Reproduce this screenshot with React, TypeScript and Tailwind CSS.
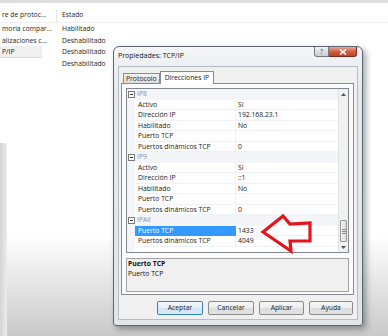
import React from 'react'

type Row =
  | { kind: 'group'; name: string }
  | { kind: 'prop'; label: string; value?: string; selected?: boolean }

const rows: Row[] = [
  { kind: 'group', name: 'IP8' },
  { kind: 'prop', label: 'Activo', value: 'Sí' },
  { kind: 'prop', label: 'Dirección IP', value: '192.168.23.1' },
  { kind: 'prop', label: 'Habilitado', value: 'No' },
  { kind: 'prop', label: 'Puerto TCP', value: '' },
  { kind: 'prop', label: 'Puertos dinámicos TCP', value: '0' },
  { kind: 'group', name: 'IP9' },
  { kind: 'prop', label: 'Activo', value: 'Sí' },
  { kind: 'prop', label: 'Dirección IP', value: '::1' },
  { kind: 'prop', label: 'Habilitado', value: 'No' },
  { kind: 'prop', label: 'Puerto TCP', value: '' },
  { kind: 'prop', label: 'Puertos dinámicos TCP', value: '0' },
  { kind: 'group', name: 'IPAll' },
  { kind: 'prop', label: 'Puerto TCP', value: '1433', selected: true },
  { kind: 'prop', label: 'Puertos dinámicos TCP', value: '4049' },
]

const bgRows = [
  { name: 'moria compar...', state: 'Habilitado' },
  { name: 'alizaciones c...', state: 'Deshabilitado' },
  { name: 'P/IP', state: 'Deshabilitado', sel: true },
  { name: '', state: 'Deshabilitado' },
]

function MinusBox() {
  return (
    <svg width="7" height="7" viewBox="0 0 7 7" className="ml-[1px]">
      <rect x="0.5" y="0.5" width="6" height="6" fill="#fff" stroke="#7a7a7a" />
      <line x1="2" y1="3.5" x2="5" y2="3.5" stroke="#333" />
    </svg>
  )
}

function GridRow({ row }: { row: Row }) {
  if (row.kind === 'group') {
    return (
      <div className="flex h-[10.5px] bg-[#f3f5f8] items-center">
        <div className="w-[8px] flex items-center">
          <MinusBox />
        </div>
        <div className="pl-[2px] text-[#8d8d8d] leading-[10px]">{row.name}</div>
      </div>
    )
  }
  return (
    <div className="flex h-[10.5px]">
      <div className="w-[8px] bg-[#f3f5f8]" />
      <div
        className={
          row.selected
            ? 'w-[101px] bg-[#3399ff] text-white pl-[3px] leading-[10.5px] whitespace-nowrap'
            : 'w-[101px] border-b border-r border-[#eef1f5] pl-[3px] leading-[10px] whitespace-nowrap text-[#1a1a1a]'
        }
      >
        {row.label}
      </div>
      <div className="flex-1 border-b border-[#eef1f5] pl-[2px] leading-[10px] text-[#1a1a1a]">
        {row.value}
      </div>
    </div>
  )
}

function Button({ label, w, primary }: { label: string; w: string; primary?: boolean }) {
  return (
    <div
      className={`${w} h-[14px] rounded-[2px] border flex items-center justify-center text-[#222] ${
        primary
          ? 'border-[#3c7fb1] bg-[linear-gradient(to_bottom,#f4f9fd_0%,#e3eff9_50%,#cfe4f5_51%,#d9ebf8_100%)]'
          : 'border-[#8a8a8a] bg-[linear-gradient(to_bottom,#f6f6f6_0%,#ececec_50%,#dddddd_51%,#e2e2e2_100%)]'
      }`}
    >
      {label}
    </div>
  )
}

export default function App() {
  return (
    <div className="relative w-[388px] h-[336px] overflow-hidden font-['Open_Sans',sans-serif] text-[6.8px] text-[#1e1e1e] bg-[linear-gradient(to_bottom,#ffffff_0%,#ffffff_70%,#c9c9c9_100%)]">
      {/* background list window */}
      <div className="border-t-[3px] border-[#dedede]">
        <div className="flex h-[20px] pt-[7px] leading-[10px] border-b border-[#f0f0f0]">
          <div className="w-[57px] pl-[2px] border-r border-[#e6e6e6]">re de protoc...</div>
          <div className="pl-[5px]">Estado</div>
        </div>
        {bgRows.map((r, i) => (
          <div key={i} className="flex h-[11.5px] leading-[11.5px]">
            <div className="w-[57px] flex">
              <div className={r.sel ? 'w-[42px] pl-[2px] bg-[#f0f0f0] border-b border-[#d8d8d8]' : 'pl-[2px]'}>
                {r.name}
              </div>
            </div>
            <div className="pl-[5px]">{r.state}</div>
          </div>
        ))}
      </div>
      <div className="absolute left-0 top-[143px] bottom-0 w-[7px] bg-[linear-gradient(to_right,#d4d4d4,#ececec)]" />

      {/* dialog window */}
      <div className="absolute left-[113px] top-[46px] w-[250px] h-[280px] border border-[#5c6670] rounded-t-[6px] rounded-b-[3px] bg-[linear-gradient(to_bottom,#f3f5f8_0%,#e6e9ee_15%,#e1e5ea_100%)] shadow-[3px_3px_6px_rgba(0,0,0,0.35)] flex flex-col">
        <div className="relative h-[19px] flex items-center pl-[4px] text-[7px] text-[#111]">
          Propiedades: TCP/IP
          <div className="absolute right-[5px] top-0 flex">
            <div className="w-[15px] h-[10px] border border-[#707a85] border-t-0 rounded-bl-[3px] bg-[linear-gradient(to_bottom,#f0f2f4,#c9ced4)] flex items-center justify-center text-[7px] leading-none text-[#555]">
              ?
            </div>
            <div className="w-[28px] h-[10px] border border-[#7a2a1c] border-t-0 border-l-0 rounded-br-[3px] bg-[linear-gradient(to_bottom,#e9a99a,#cf5a40_55%,#c2432a)] flex items-center justify-center">
              <svg width="8" height="6" viewBox="0 0 8 6">
                <path d="M1 0.5 L7 5.5 M7 0.5 L1 5.5" stroke="#fff" strokeWidth="1.6" />
              </svg>
            </div>
          </div>
        </div>

        <div className="mx-[4px] h-[254px] border border-[#b4bcc5] bg-[#f0f0f0] flex flex-col">
          {/* tabs */}
          <div className="flex items-end h-[16px] pt-[4px] pl-[4px]">
            <div className="h-[10px] px-[2px] border border-[#898c95] border-b-0 bg-[linear-gradient(to_bottom,#f3f3f3,#dcdcdc)] leading-[10px] text-[#222]">
              Protocolo
            </div>
            <div className="relative z-10 h-[13px] -mb-px px-[4px] border border-[#898c95] border-b-0 bg-white leading-[12px] text-[#222]">
              Direcciones IP
            </div>
          </div>

          {/* tab panel */}
          <div className="ml-[2px] mr-[3px] h-[212px] border border-[#898c95] bg-[#fbfbfb] px-[4px] pt-[4px] flex flex-col">
            <div className="h-[165px] border border-[#828790] bg-white flex">
              <div className="flex-1 flex flex-col">
                {rows.map((r, i) => (
                  <GridRow key={i} row={r} />
                ))}
                <div className="flex-1 flex">
                  <div className="w-[8px] bg-[#f3f5f8]" />
                </div>
              </div>
              <div className="w-[10px] bg-[#f1f1f1] border-l border-[#e2e2e2] flex flex-col">
                <div className="h-[10px] flex items-center justify-center">
                  <svg width="5" height="3" viewBox="0 0 5 3">
                    <path d="M0 3 L2.5 0 L5 3 Z" fill="#555" />
                  </svg>
                </div>
                <div className="flex-1">
                  <div className="mt-[121px] h-[22px] mx-[1px] border border-[#9a9a9a] rounded-[1px] bg-[linear-gradient(to_right,#f2f2f2,#dcdcdc)] flex flex-col items-center justify-center gap-[1px]">
                    <div className="w-[4px] h-px bg-[#8a8a8a]" />
                    <div className="w-[4px] h-px bg-[#8a8a8a]" />
                    <div className="w-[4px] h-px bg-[#8a8a8a]" />
                  </div>
                </div>
                <div className="h-[10px] flex items-center justify-center">
                  <svg width="5" height="3" viewBox="0 0 5 3">
                    <path d="M0 0 L2.5 3 L5 0 Z" fill="#555" />
                  </svg>
                </div>
              </div>
            </div>

            <div className="mt-[5px] h-[34px] border border-[#a3a3a3] bg-[#f0f0f0] px-[1px] leading-[10px] text-[#111]">
              <div className="font-bold">Puerto TCP</div>
              <div>Puerto TCP</div>
            </div>
          </div>

          {/* buttons */}
          <div className="mt-[6px] flex justify-end gap-[5px] pr-[4px]">
            <Button label="Aceptar" w="w-[46px]" primary />
            <Button label="Cancelar" w="w-[46px]" />
            <Button label="Aplicar" w="w-[45px]" />
            <Button label="Ayuda" w="w-[44px]" />
          </div>
        </div>
      </div>

      {/* red annotation arrow */}
      <svg className="absolute left-0 top-0 pointer-events-none" width="388" height="336" viewBox="0 0 388 336">
        <path
          d="M263 232 L283 216 L290 224 L310 223 L310 241 L290 241 L291 251 Z"
          fill="none"
          stroke="#e5141c"
          strokeWidth="3.2"
          strokeLinejoin="miter"
        />
      </svg>
    </div>
  )
}
